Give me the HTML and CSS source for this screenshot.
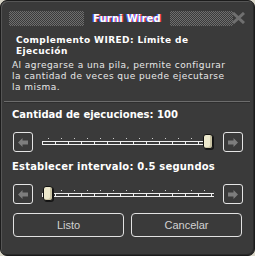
FILE: index.html
```html
<!DOCTYPE html>
<html>
<head>
<meta charset="utf-8">
<link rel="stylesheet" href="styles.css">
</head>
<body>
<div class="window">
  <div class="header">
    <div class="stripes"></div>
    <div class="title">Furni Wired</div>
    <div class="right">
      <div class="stripes"></div>
      <svg class="close" width="13" height="12" viewBox="0 0 13 12">
        <path d="M1 1 L12 11 M12 1 L1 11" stroke="#6f6f6f" stroke-width="3" fill="none"/>
      </svg>
    </div>
  </div>
  <div class="content">
    <div class="heading">Complemento WIRED: Límite de Ejecución</div>
    <p class="desc">Al agregarse a una pila, permite configurar la cantidad de veces que puede ejecutarse la misma.</p>
  </div>
  <div class="divider"></div>
  <div class="section">
    <div class="label">Cantidad de ejecuciones: 100</div>
    <div class="slider">
      <div class="arrow-btn"><svg width="10" height="9" viewBox="0 0 10 9"><polygon points="0,4.5 4.5,0 4.5,2.5 10,2.5 10,6.5 4.5,6.5 4.5,9" fill="#7d7d7d"/></svg></div>
      <div class="track"><div class="thumb thumb-end"></div></div>
      <div class="arrow-btn"><svg width="10" height="9" viewBox="0 0 10 9"><polygon points="10,4.5 5.5,0 5.5,2.5 0,2.5 0,6.5 5.5,6.5 5.5,9" fill="#7d7d7d"/></svg></div>
    </div>
    <div class="label label2">Establecer intervalo: 0.5 segundos</div>
    <div class="slider">
      <div class="arrow-btn"><svg width="10" height="9" viewBox="0 0 10 9"><polygon points="0,4.5 4.5,0 4.5,2.5 10,2.5 10,6.5 4.5,6.5 4.5,9" fill="#7d7d7d"/></svg></div>
      <div class="track"><div class="thumb thumb-start"></div></div>
      <div class="arrow-btn"><svg width="10" height="9" viewBox="0 0 10 9"><polygon points="10,4.5 5.5,0 5.5,2.5 0,2.5 0,6.5 5.5,6.5 5.5,9" fill="#7d7d7d"/></svg></div>
    </div>
  </div>
  <div class="buttons">
    <div class="btn">Listo</div>
    <div class="btn">Cancelar</div>
  </div>
</div>
</body>
</html>
```
FILE: styles.css
```css
html, body {
  margin: 0;
  padding: 0;
  background: #d9d6c8;
}
body {
  width: 255px;
  height: 256px;
  font-family: "DejaVu Sans", "Liberation Sans", sans-serif;
}
.window {
  width: 255px;
  height: 256px;
  box-sizing: border-box;
  border: 1px solid #1c1c1c;
  border-radius: 7px;
  background: #3a3a3a;
  box-shadow: inset 1px 1px 0 #555, inset -1px -1px 0 #2a2a2a;
  overflow: hidden;
  display: flex;
  flex-direction: column;
}
.header {
  display: grid;
  grid-template-columns: 1fr auto 1fr;
  column-gap: 9px;
  align-items: center;
  padding: 6px 9px 0 8px;
  height: 22px;
}
.stripes {
  height: 15px;
  background: repeating-conic-gradient(#6e6e6e 0 25%, transparent 0 50%) 0 0 / 2px 2px;
}
.right {
  display: flex;
  align-items: center;
}
.right .stripes {
  flex: 1;
}
.close {
  display: block;
  margin-left: -1px;
}
.title {
  color: #fff;
  font-weight: bold;
  font-size: 10px;
  text-shadow: -1px 0 #4460ff, 1px 0 #ff4050;
  letter-spacing: 0.2px;
}
.content {
  padding: 6px 18px 0 11px;
}
.heading {
  color: #fff;
  font-weight: bold;
  font-size: 9px;
  line-height: 11px;
  padding-left: 4px;
  padding-right: 14px;
  letter-spacing: 0.4px;
}
.desc {
  margin: 3px 0 0;
  color: #e8e8e8;
  font-size: 9px;
  line-height: 11px;
  letter-spacing: 0.45px;
}
.divider {
  margin: 8px 4px 0 3px;
  height: 1px;
  background: #6c6c6c;
  border-bottom: 1px solid #2e2e2e;
}
.section {
  padding: 6px 0 0 0;
}
.label {
  color: #fff;
  font-weight: bold;
  font-size: 10px;
  line-height: 11px;
  padding-left: 11px;
}
.label2 {
  margin-top: 9px;
  letter-spacing: 0.2px;
}
.slider {
  display: flex;
  align-items: center;
  padding: 0 11px 0 12px;
  margin-top: 12px;
  gap: 9px;
  height: 20px;
}
.arrow-btn {
  width: 20px;
  height: 20px;
  box-sizing: border-box;
  border: 1px solid #e4e4e4;
  border-radius: 3px;
  display: flex;
  align-items: center;
  justify-content: center;
}
.arrow-btn svg {
  display: block;
}
.track {
  flex: 1;
  height: 4px;
  box-sizing: border-box;
  border-top: 1px solid #eeeeee;
  border-bottom: 1px solid #eeeeee;
  background: repeating-linear-gradient(90deg, #eeeeee 0 1px, transparent 1px 13px);
  position: relative;
  margin-top: 1px;
}
.track::before {
  content: "";
  position: absolute;
  left: 6px;
  right: 0;
  top: -4px;
  height: 1px;
  background: repeating-linear-gradient(90deg, #cfcfcf 0 1px, transparent 1px 13px);
}
.thumb {
  position: absolute;
  top: -8px;
  width: 10px;
  height: 15px;
  box-sizing: border-box;
  border: 1px solid #111;
  border-radius: 3px;
  background: #ece8cc;
  box-shadow: inset -2px -1px 0 #c9c3a3, 1px 1px 0 #151515;
}
.thumb-end {
  right: 1px;
}
.thumb-start {
  left: 1px;
}
.buttons {
  display: flex;
  gap: 7px;
  padding: 9px 12px 0 12px;
}
.btn {
  flex: 1;
  height: 24px;
  box-sizing: border-box;
  border: 1px solid #e2e2e2;
  border-radius: 4px;
  color: #d2d2d2;
  font-family: "Liberation Sans", sans-serif;
  font-size: 11px;
  display: flex;
  align-items: center;
  justify-content: center;
}
```
